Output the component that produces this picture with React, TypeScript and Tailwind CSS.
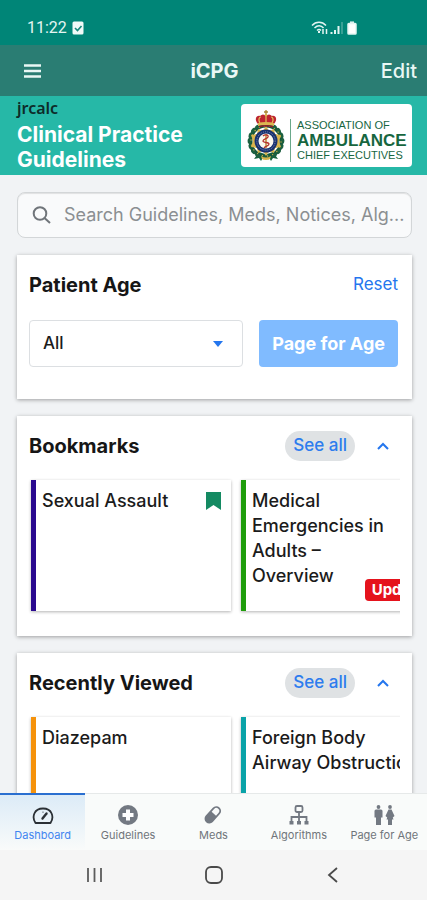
import React from "react";

type Tile = { title: string; bar: string; bookmarked?: boolean; updated?: boolean };

const bookmarks: Tile[] = [
  { title: "Sexual Assault", bar: "border-[#2a0a8f]", bookmarked: true },
  { title: "Medical Emergencies in Adults – Overview", bar: "border-[#1f9d0c]", bookmarked: true, updated: true },
];

const recent: Tile[] = [
  { title: "Diazepam", bar: "border-[#f5920b]" },
  { title: "Foreign Body Airway Obstruction", bar: "border-[#0aa3a8]" },
];

function Crest() {
  const leaves = Array.from({ length: 18 }, (_, i) => i * 20 + 10);
  return (
    <svg viewBox="0 0 40 54" className="h-[54px] w-10 shrink-0" aria-hidden="true">
      <path d="M13 43l-5 7 5-1 2 3 4-7zM27 43l5 7-5-1-2 3-4-7z" fill="#17623f" />
      <circle cx="20" cy="32" r="15.5" fill="none" stroke="#17573a" strokeWidth="4" />
      {leaves.map((a) => (
        <g key={a} transform={`rotate(${a} 20 32)`}>
          <ellipse cx="20" cy="15.5" rx="2.8" ry="1.9" fill="#1c6040" />
          <circle cx="21" cy="17" r="0.7" fill="#c8b04a" />
        </g>
      ))}
      <path d="M20 17l3 5 5-2 1 5 6 1-2 6 2 6-6 1-1 5-5-2-3 5-3-5-5 2-1-5-6-1 2-6-2-6 6-1 1-5 5 2z" fill="#d9b44b" />
      <circle cx="20" cy="32" r="11.5" fill="#18316f" />
      <circle cx="20" cy="32" r="9.2" fill="none" stroke="#8f9cc2" strokeWidth="0.8" strokeDasharray="1 1" />
      <circle cx="20" cy="32" r="7.5" fill="#fbf8ee" />
      <path d="M20 25v14" stroke="#b88a2c" strokeWidth="1.4" />
      <path d="M17 27c2-2 6-1 5 1s-5 2-5 4 6 1 6 3-4 2-5 4" fill="none" stroke="#b5342d" strokeWidth="1.3" />
      <path d="M12 15c-4-4-2-9 2-8 2-2 4-2 6 0 2-2 4-2 6 0 4-1 6 4 2 8z" fill="#bd2430" />
      <path d="M14 14c-2-3-1-6 1-6M26 14c2-3 1-6-1-6M20 14V7" fill="none" stroke="#e6c25a" strokeWidth="1.2" />
      <path d="M12 14q8-2 16 0v3q-8-2-16 0z" fill="#dcb651" />
      <path d="M13 17q7-2 14 0v1.5q-7-2-14 0z" fill="#8e1d2b" />
      <path d="M20 1v6M18 3h4" stroke="#a8842f" strokeWidth="1.3" />
      <circle cx="20" cy="6" r="1.3" fill="#d9b44b" />
      <path d="M15 47q5 3 10 0l-1 3q-4 2-8 0z" fill="#d9b44b" />
    </svg>
  );
}

function Chevron() {
  return (
    <svg viewBox="0 0 14 8" className="h-2 w-3.5" fill="none" stroke="#2476ee" strokeWidth="2" aria-hidden="true">
      <path d="M2 7l5-5 5 5" />
    </svg>
  );
}

function TileCard({ tile }: { tile: Tile }) {
  return (
    <li
      className={`relative h-[131px] w-[200px] shrink-0 border-l-[5px] bg-white pt-2 pl-[6px] shadow-[0_1px_3px_rgba(0,0,0,0.3)] ${tile.bar} ${tile.bookmarked ? "pr-10" : "pr-5"}`}
    >
      <a href="#guideline" className="block text-lg leading-[25px] font-medium text-[#1b1b1b]">
        {tile.title}
      </a>
      {tile.bookmarked && (
        <svg viewBox="0 0 15 18" className="absolute top-3 right-[10px] h-[18px] w-[15px]" role="img" aria-label="Bookmarked">
          <path d="M0 0h15v18l-7.5-5L0 18z" fill="#148a62" />
        </svg>
      )}
      {tile.updated && (
        <span className="absolute right-0 bottom-[10px] rounded-sm bg-[#e5131d] px-[7px] text-[15px] leading-[22px] font-bold text-white">
          Updated
        </span>
      )}
    </li>
  );
}

function Section({ title, tiles }: { title: string; tiles: Tile[] }) {
  return (
    <section className="shrink-0 bg-white pt-[15px] pb-[25px] shadow-[0_1px_4px_rgba(0,0,0,0.35)]">
      <header className="flex h-[30px] items-center pr-[22px] pl-3">
        <h2 className="flex-1 text-[20px] font-bold text-[#161616]">{title}</h2>
        <button className="h-[30px] rounded-full bg-[#dfe2e4] px-2 text-[17px] font-medium text-[#2d7cee]">See all</button>
        <button className="ml-[21px]" aria-label={`Collapse ${title}`}>
          <Chevron />
        </button>
      </header>
      <ul className="mr-3 ml-[10px] -mb-1 flex gap-[10px] overflow-hidden pt-[19px] pb-1 pl-1">
        {tiles.map((t) => (
          <TileCard key={t.title} tile={t} />
        ))}
      </ul>
    </section>
  );
}

const iconClass = "h-[22px] w-[22px]";

const tabs = [
  {
    label: "Dashboard",
    icon: (
      <svg viewBox="0 0 22 22" className={iconClass} fill="none" stroke="#2b3035" strokeWidth="1.8" strokeLinecap="round" strokeLinejoin="round">
        <path d="M3.5 19C-.5 13 2 4.5 11 4.5s11.500 8.500 7.500 14.500z" />
        <path d="M10.500 14.500l4-5" strokeWidth="2.400" />
        <path d="M11 8v.1" strokeWidth="1.200" />
      </svg>
    ),
  },
  {
    label: "Guidelines",
    icon: (
      <svg viewBox="0 0 22 22" className={iconClass}>
        <circle cx="11" cy="11" r="10" fill="#737982" />
        <path d="M9 5.500h4V9h3.500v4H13v3.500H9V13H5.500V9H9z" fill="#fff" />
      </svg>
    ),
  },
  {
    label: "Meds",
    icon: (
      <svg viewBox="0 0 22 22" className={iconClass}>
        <g transform="rotate(-48 11 11)">
          <rect x="1" y="6" width="20" height="9.500" rx="4.750" fill="#737982" />
          <path d="M12.500 7.800h3.700a2.950 2.950 0 010 5.900h-3.700z" fill="#f8fafa" />
        </g>
      </svg>
    ),
  },
  {
    label: "Algorithms",
    icon: (
      <svg viewBox="0 0 22 22" className={iconClass} fill="none" stroke="#737982" strokeWidth="1.8">
        <rect x="7.500" y="2" width="7" height="6" rx="1.500" />
        <path d="M11 8v10M3.500 17v-4h15v4" />
        <path d="M1.500 18.700h4M9 18.700h4M16.500 18.700h4" strokeWidth="3.400" />
      </svg>
    ),
  },
  {
    label: "Page for Age",
    icon: (
      <svg viewBox="0 0 22 22" className={iconClass} fill="#737982">
        <circle cx="5.500" cy="3" r="1.900" />
        <path d="M3 5.500h5a1.500 1.500 0 011.500 1.500v6.500H8v7.500H3v-7.500H1.500V7A1.500 1.500 0 013 5.500z" />
        <circle cx="17" cy="3" r="1.900" />
        <path d="M15.500 5.500h3l3 6.500-1.700 1.500.7 2H19v5.500h-4v-5.500h-1.500l.7-2L12.500 12z" />
      </svg>
    ),
  },
];

export default function App() {
  return (
    <div className="flex h-screen flex-col overflow-hidden bg-[#f1f3f5] font-['Inter','Liberation_Sans',sans-serif]">
      <div className="flex h-[45px] shrink-0 items-center bg-[#008577] pt-[10px] pr-[68px] pl-[27px] text-[#e4f5f2]">
        <span className="font-['Roboto',sans-serif] text-base">11:22</span>
        <svg viewBox="0 0 12 14" className="ml-[5px] h-[14px] w-3" aria-hidden="true">
          <rect x="0.5" y="0.5" width="11" height="13" rx="1.5" fill="#f0faf8" />
          <path d="M3 7l2.500 2.500L9.500 5" fill="none" stroke="#16877b" strokeWidth="1.6" />
        </svg>
        <svg viewBox="0 0 48 16" className="ml-auto h-4 w-12" fill="none" stroke="#e4f5f2" strokeWidth="1.5" aria-hidden="true">
          <path d="M1 5.500c4-4.300 10-4.300 14 0M3.500 8c3-3 6.500-3 9 0M6 10.500c1.500-1.300 2.700-1.300 4 0" />
          <path d="M8 11v2" strokeWidth="2" />
          <path d="M12 9v5M15.500 9v5" />
          <path d="M20.500 12v2M24 10v4M27.500 6v8" strokeWidth="2" />
          <path d="M31 2v12" strokeWidth="1" opacity="0.5" />
          <rect x="37" y="3.5" width="8" height="10.5" rx="0.8" fill="#fff" />
          <path d="M39 2.200h4" />
        </svg>
      </div>

      <header className="grid h-[51px] shrink-0 grid-cols-3 items-center bg-[#2a7d73] pr-[10px] pl-6 text-[#e9f7f5]">
        <button aria-label="Menu">
          <svg viewBox="0 0 17 14" className="h-[14px] w-[17px]" stroke="currentColor" strokeWidth="2.4" aria-hidden="true">
            <path d="M0 1.500h17M0 7h17M0 12.500h17" />
          </svg>
        </button>
        <h1 className="-ml-3 text-center text-[20px] font-bold">iCPG</h1>
        <button className="text-right text-[20px] font-medium">Edit</button>
      </header>

      <div className="flex h-[79px] shrink-0 items-start justify-between bg-[#26b8a7] pr-[15px] pl-[17px]">
        <div>
          <p className="pt-[2px] font-['Noto_Sans',sans-serif] text-base leading-5 font-semibold text-[#0d2b29]">jrcalc</p>
          <p className="mt-1 text-[21px] leading-[25px] font-bold text-white">
            Clinical Practice
            <br />
            Guidelines
          </p>
        </div>
        <div className="mt-2 flex h-[63px] w-[171px] items-center rounded-[4px] bg-white pl-[5px] whitespace-nowrap">
          <Crest />
          <div className="mt-[10px] ml-[4px] border-l border-[#6aa88a] pl-[6px] font-['Liberation_Sans',sans-serif] text-[#17663f]">
            <p className="text-[11px] leading-[13px] font-medium">ASSOCIATION OF</p>
            <p className="text-[17px] leading-[17px] font-bold">AMBULANCE</p>
            <p className="text-[11px] leading-[13px] font-medium">CHIEF EXECUTIVES</p>
          </div>
        </div>
      </div>

      <main className="flex min-h-0 flex-1 flex-col gap-[17px] overflow-hidden pt-[17px] pr-[15px] pl-[17px]">
        <label className="flex h-[46px] shrink-0 items-center rounded-lg border border-[#d3d6d8] bg-[#f9fafb] pl-[14px] shadow-[inset_0_1px_1px_rgba(0,0,0,0.1)]">
          <svg viewBox="0 0 20 20" className="h-5 w-5 shrink-0" fill="none" stroke="#70757a" strokeWidth="2" aria-hidden="true">
            <circle cx="8" cy="8.500" r="6.300" />
            <path d="M12.500 13l5.500 5" />
          </svg>
          <input
            type="text"
            aria-label="Search"
            placeholder="Search Guidelines, Meds, Notices, Alg..."
            className="ml-3 min-w-0 flex-1 bg-transparent text-lg text-[#333] outline-none placeholder:text-[#8b8f92]"
          />
        </label>

        <section className="shrink-0 bg-white pt-[15px] pr-[14px] pb-[32px] pl-3 shadow-[0_1px_4px_rgba(0,0,0,0.35)]">
          <header className="flex h-[30px] items-center justify-between">
            <h2 className="text-[20px] font-bold text-[#161616]">Patient Age</h2>
            <button className="text-[17px] text-[#2476ee]">Reset</button>
          </header>
          <div className="mt-5 flex gap-4">
            <div className="relative flex-1">
              <select
                aria-label="Patient Age"
                className="h-[47px] w-full appearance-none rounded-[4px] border border-[#dcdfe2] bg-white px-[13px] text-[17px] font-medium text-[#1b1b1b]"
              >
                <option>All</option>
              </select>
              <svg viewBox="0 0 10 6" className="pointer-events-none absolute top-[21px] right-5 h-1.5 w-2.5" aria-hidden="true">
                <path d="M0 0h10L5 6z" fill="#2476ee" />
              </svg>
            </div>
            <button className="h-[47px] rounded-[4px] bg-[#80bbff] px-[13px] text-lg font-bold text-white">Page for Age</button>
          </div>
        </section>

        <Section title="Bookmarks" tiles={bookmarks} />
        <Section title="Recently Viewed" tiles={recent} />
      </main>

      <nav className="grid h-[57px] shrink-0 grid-cols-5 border-t border-[#e6e9e9] bg-[#f9fbfa]">
        {tabs.map((t, i) => (
          <a
            key={t.label}
            href="#tab"
            className={`-mt-px flex flex-col items-center border-t-2 pt-[9px] text-[11px] leading-[18px] whitespace-nowrap ${
              i === 0 ? "border-[#2a6fd0] bg-linear-to-b from-[#dcebf7] to-[#f9fbfa] text-[#4285f0]" : "border-transparent text-[#70757a]"
            }`}
          >
            {t.icon}
            <span>{t.label}</span>
          </a>
        ))}
      </nav>

      <div className="flex h-[50px] shrink-0 items-center justify-between bg-[#f5f5f5] px-[84px]">
        <button aria-label="Recent apps">
          <svg viewBox="0 0 20 20" className="h-5 w-5" stroke="#5c5c5c" strokeWidth="1.8" aria-hidden="true">
            <path d="M4 3v14M10.500 3v14M17 3v14" />
          </svg>
        </button>
        <button aria-label="Home">
          <svg viewBox="0 0 20 20" className="h-5 w-5" fill="none" stroke="#4a4a4a" strokeWidth="1.8" aria-hidden="true">
            <rect x="2" y="2" width="16" height="16" rx="5" />
          </svg>
        </button>
        <button aria-label="Back">
          <svg viewBox="0 0 20 20" className="h-5 w-5" fill="none" stroke="#4a4a4a" strokeWidth="1.8" aria-hidden="true">
            <path d="M14 3l-8 7 8 7" />
          </svg>
        </button>
      </div>
    </div>
  );
}
